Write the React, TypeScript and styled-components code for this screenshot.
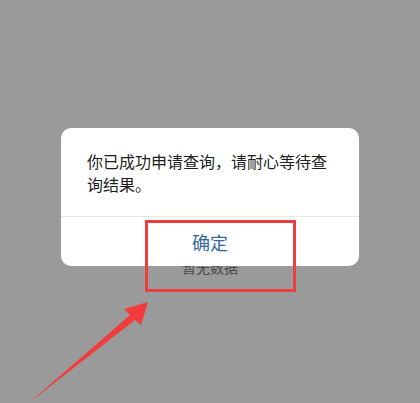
import React from "react";
import styled, { createGlobalStyle } from "styled-components";

const GlobalStyle = createGlobalStyle`
  html, body {
    margin: 0;
    padding: 0;
    width: 420px;
    height: 403px;
    overflow: hidden;
    background: #999999;
    font-family: "Noto Sans CJK SC", "Noto Sans", sans-serif;
  }
`;

const Screen = styled.div`
  position: relative;
  width: 420px;
  height: 403px;
  background: #9a9a9a;
  overflow: hidden;
`;

// page content behind the modal mask
const PageBody = styled.div`
  display: flex;
  flex-direction: column;
  align-items: center;
  padding-top: 258px;
`;

const EmptyHint = styled.span`
  font-size: 14px;
  line-height: 18px;
  color: #4a4a4a;
`;

const ModalLayer = styled.div`
  position: absolute;
  inset: 0;
  display: flex;
  justify-content: center;
  padding-top: 128px;
`;

const Dialog = styled.div`
  width: 298px;
  height: 138px;
  background: #ffffff;
  border-radius: 10px;
  display: flex;
  flex-direction: column;
  overflow: hidden;
`;

const Message = styled.p`
  margin: 0;
  height: 89px;
  box-sizing: border-box;
  padding: 22px 26px 0 26px;
  font-size: 16px;
  line-height: 23px;
  color: #1e1e1e;
  border-bottom: 1px solid #e6e6e6;
`;

const ConfirmButton = styled.button`
  flex: 1;
  border: none;
  background: transparent;
  font-family: inherit;
  font-size: 18px;
  color: #33679f;
  padding: 0;
`;

const Highlight = styled.div`
  position: absolute;
  left: 145px;
  top: 220px;
  width: 151px;
  height: 72px;
  box-sizing: border-box;
  border: 3px solid #e8403f;
`;

const Arrow = styled.svg`
  position: absolute;
  left: 0;
  top: 0;
`;

export default function App() {
  return (
    <>
      <GlobalStyle />
      <Screen>
        <PageBody>
          <EmptyHint>暂无数据</EmptyHint>
        </PageBody>
        <ModalLayer>
          <Dialog>
            <Message>你已成功申请查询，请耐心等待查询结果。</Message>
            <ConfirmButton>确定</ConfirmButton>
          </Dialog>
        </ModalLayer>
        <Highlight />
        <Arrow width="420" height="403" viewBox="0 0 420 403">
          <polygon
            points="148,302 124,309 130,315 30,402 135,320 141,325"
            fill="#f23b3b"
          />
        </Arrow>
      </Screen>
    </>
  );
}
